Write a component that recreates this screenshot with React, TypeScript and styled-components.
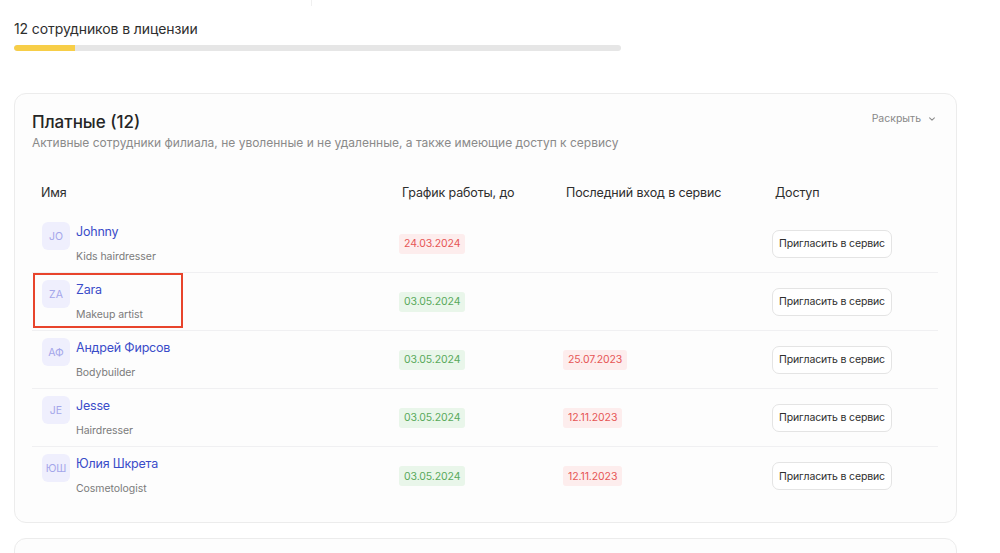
import styled, { createGlobalStyle } from "styled-components";

type Tone = "red" | "green";

type EmployeeType = {
    initials: string
    name: string
    role: string
    schedule: { date: string, tone: Tone }
    lastLogin?: { date: string, tone: Tone }
    highlighted?: boolean
}

const employees: EmployeeType[] = [
    { initials: "JO", name: "Johnny", role: "Kids hairdresser", schedule: { date: "24.03.2024", tone: "red" } },
    { initials: "ZA", name: "Zara", role: "Makeup artist", schedule: { date: "03.05.2024", tone: "green" }, highlighted: true },
    { initials: "АФ", name: "Андрей Фирсов", role: "Bodybuilder", schedule: { date: "03.05.2024", tone: "green" }, lastLogin: { date: "25.07.2023", tone: "red" } },
    { initials: "JE", name: "Jesse", role: "Hairdresser", schedule: { date: "03.05.2024", tone: "green" }, lastLogin: { date: "12.11.2023", tone: "red" } },
    { initials: "ЮШ", name: "Юлия Шкрета", role: "Cosmetologist", schedule: { date: "03.05.2024", tone: "green" }, lastLogin: { date: "12.11.2023", tone: "red" } },
];

const Global = createGlobalStyle`
    body {
        margin: 0;
        background: #ffffff;
        font-family: Inter, "Noto Sans", "Liberation Sans", sans-serif;
        color: #2b2b2b;
    }
`

export default function App() {
    return (
        <>
            <Global/>
            <Page>
                <TopStrip><TopLeft/></TopStrip>
                <LicenseTitle>12 сотрудников в лицензии</LicenseTitle>
                <Progress><ProgressFill style={{ width: `${(12 / 120) * 100}%` }}/></Progress>

                <Card>
                    <CardHead>
                        <div>
                            <Title>Платные (12)</Title>
                            <Subtitle>Активные сотрудники филиала, не уволенные и не удаленные, а также имеющие доступ к сервису</Subtitle>
                        </div>
                        <Expand>
                            Раскрыть
                            <svg width="8" height="8" viewBox="0 0 10 10" fill="none">
                                <path d="M2 3.5l3 3 3-3" stroke="#8a8a8a" strokeWidth="1.3" strokeLinecap="round" strokeLinejoin="round"/>
                            </svg>
                        </Expand>
                    </CardHead>

                    <Table>
                        <HeadRow>
                            <HeadCell $first>Имя</HeadCell>
                            <HeadCell>График работы, до</HeadCell>
                            <HeadCell>Последний вход в сервис</HeadCell>
                            <HeadCell>Доступ</HeadCell>
                        </HeadRow>
                        {employees.map(e => (
                            <Row key={e.name}>
                                <NameCell>
                                    <Avatar>{e.initials}</Avatar>
                                    <NameBlock>
                                        <Name>{e.name}</Name>
                                        <Role>{e.role}</Role>
                                    </NameBlock>
                                </NameCell>
                                <Cell><Badge $tone={e.schedule.tone}>{e.schedule.date}</Badge></Cell>
                                <Cell>{e.lastLogin && <Badge $tone={e.lastLogin.tone}>{e.lastLogin.date}</Badge>}</Cell>
                                <Cell><InviteButton>Пригласить в сервис</InviteButton></Cell>
                                {e.highlighted && <Highlight/>}
                            </Row>
                        ))}
                    </Table>
                </Card>

                <NextCard/>
            </Page>
        </>
    );
}

const Page = styled.div`
    padding: 0 43px 0 14px;
    height: 553px;
    overflow: hidden;
    box-sizing: border-box;
`

const TopStrip = styled.div`
    height: 6px;
`

const TopLeft = styled.div`
    width: 297px;
    height: 100%;
    border-right: 1px solid #f0f0f0;
`

const LicenseTitle = styled.div`
    margin-top: 14px;
    font-size: 14px;
    line-height: 17px;
    letter-spacing: -0.1px;
    color: #2e2e2e;
`

const Progress = styled.div`
    margin-top: 8px;
    width: 607px;
    height: 6px;
    border-radius: 3px;
    background: #e6e6e6;
    overflow: hidden;
`

const ProgressFill = styled.div`
    height: 100%;
    background: #f7ce48;
    border-radius: 3px 0 0 3px;
`

const Card = styled.div`
    margin-top: 42px;
    border: 1px solid #ececec;
    border-radius: 12px;
    background: #fdfdfd;
    padding: 17px 18px 17px 17px;
`

const NextCard = styled(Card)`
    margin-top: 15px;
    height: 60px;
`

const CardHead = styled.div`
    display: flex;
    justify-content: space-between;
    align-items: flex-start;
`

const Title = styled.div`
    font-size: 17px;
    line-height: 22px;
    font-weight: 500;
    color: #262626;
`

const Subtitle = styled.div`
    margin-top: 1px;
    font-size: 12px;
    line-height: 18px;
    color: #8a8a8a;
`

const Expand = styled.div`
    display: flex;
    align-items: center;
    gap: 7px;
    margin-top: 1px;
    margin-right: 2px;
    font-size: 10.5px;
    color: #888;
`

const Table = styled.div`
    margin-top: 18px;
`

const columns = "367px 164px 209px 1fr";

const HeadRow = styled.div`
    display: grid;
    grid-template-columns: ${columns};
    height: 45px;
    align-items: center;
`

const HeadCell = styled.div<{ $first?: boolean }>`
    padding-left: ${props => props.$first ? "9px" : "3px"};
    font-size: 12.5px;
    letter-spacing: -0.15px;
    color: #2e2e2e;
`

const Row = styled.div`
    position: relative;
    display: grid;
    grid-template-columns: ${columns};
    height: 58px;
    box-sizing: border-box;
    border-bottom: 1px solid #f0f0f2;

    &:last-child {
        border-bottom: none;
    }
`

const NameCell = styled.div`
    display: flex;
    align-items: flex-start;
    gap: 6px;
    padding: 7px 0 0 10px;
`

const NameBlock = styled.div`
    padding-top: 1px;
`

const Cell = styled.div`
    display: flex;
    align-items: center;
`

const Avatar = styled.div`
    width: 28px;
    height: 28px;
    border-radius: 6px;
    background: #efeffd;
    color: #a4a6ea;
    font-size: 10.5px;
    display: flex;
    align-items: center;
    justify-content: center;
`

const Name = styled.div`
    font-size: 12.5px;
    line-height: 18px;
    letter-spacing: -0.2px;
    color: #3a4cc9;
`

const Role = styled.div`
    margin-top: 8px;
    font-size: 10.5px;
    line-height: 16px;
    letter-spacing: -0.05px;
    color: #7b7b7b;
`

const Badge = styled.span<{ $tone: Tone }>`
    display: inline-flex;
    align-items: center;
    height: 20px;
    padding: 0 5px;
    border-radius: 3px;
    font-size: 10.5px;
    letter-spacing: -0.1px;
    background: ${props => props.$tone === "red" ? "#fdeded" : "#e9f6ea"};
    color: ${props => props.$tone === "red" ? "#e65555" : "#58a95b"};
`

const InviteButton = styled.button`
    width: 120px;
    height: 28px;
    padding: 0;
    border: 1px solid #e4e4e4;
    border-radius: 7px;
    background: #fff;
    font-family: inherit;
    font-size: 10.5px;
    letter-spacing: -0.15px;
    color: #2e2e2e;
    cursor: pointer;
`

const Highlight = styled.div`
    position: absolute;
    left: 1px;
    top: 0;
    width: 150px;
    height: 55px;
    box-sizing: border-box;
    border: 2px solid #e8442c;
    pointer-events: none;
`
